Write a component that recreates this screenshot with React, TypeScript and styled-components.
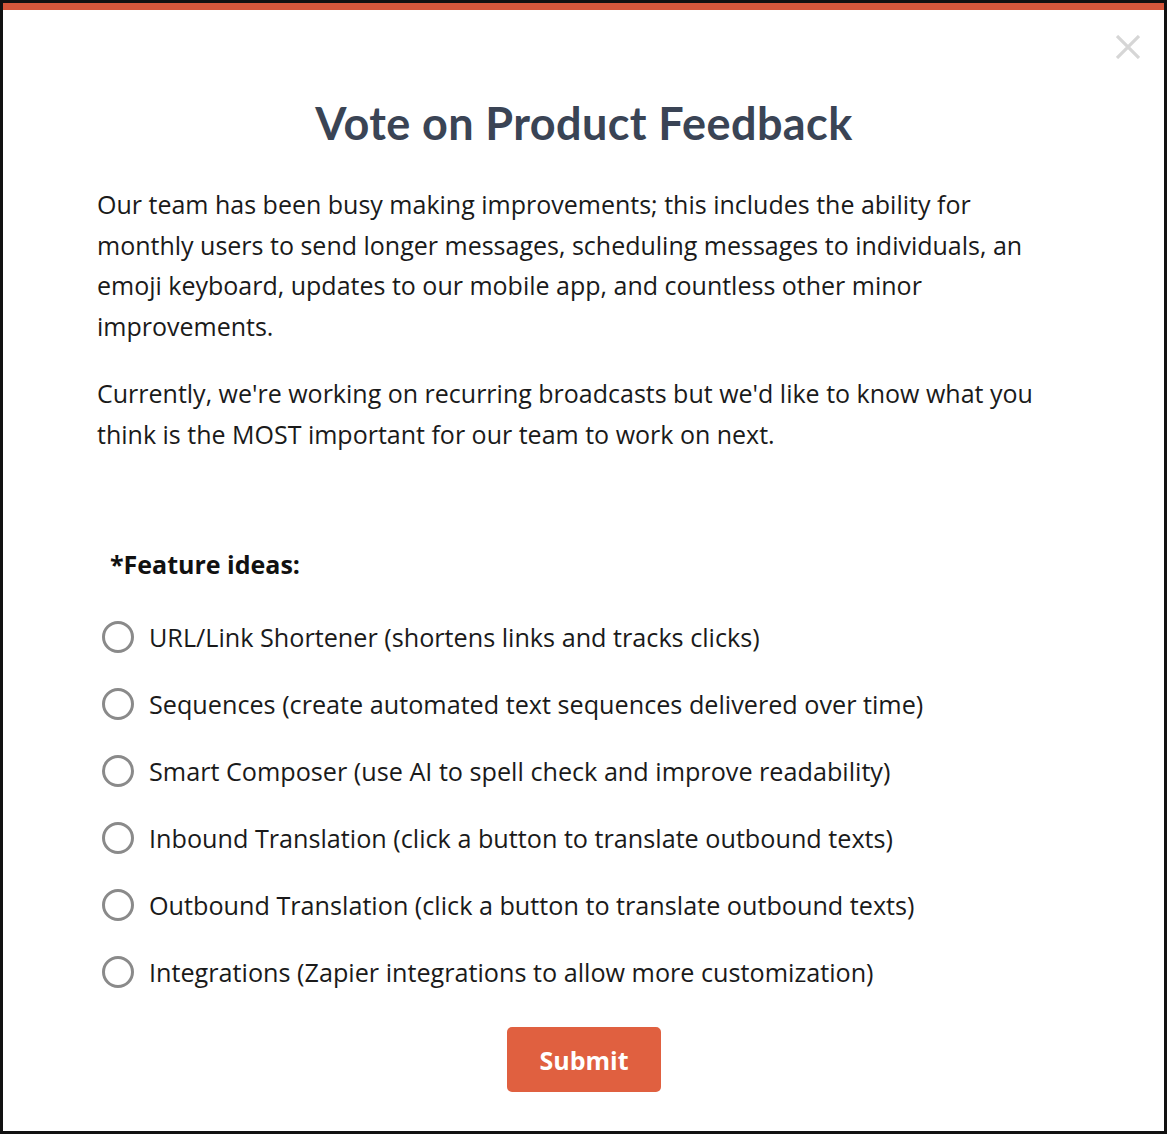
import styled, { createGlobalStyle } from "styled-components";

const GlobalStyle = createGlobalStyle`
  html, body {
    margin: 0;
    padding: 0;
    background: #000;
  }
  * {
    box-sizing: border-box;
  }
`;

const Frame = styled.div`
  width: 1167px;
  height: 1134px;
  border: 3px solid #111;
  background: #fff;
  position: relative;
  display: flex;
  flex-direction: column;
`;

const TopBar = styled.div`
  height: 7px;
  background: #d5573b;
  flex-shrink: 0;
`;

const CloseButton = styled.button`
  position: absolute;
  top: 29px;
  right: 21px;
  width: 30px;
  height: 30px;
  padding: 0;
  border: none;
  background: transparent;
  cursor: pointer;
  display: flex;
  align-items: center;
  justify-content: center;
`;

const Content = styled.div`
  padding: 0 93px 0 94px;
  display: flex;
  flex-direction: column;
  font-family: "Open Sans", "Noto Sans", sans-serif;
  color: #1a1a1a;
`;

const Title = styled.h1`
  margin: 88px 0 36px;
  text-align: center;
  font-family: Lato, "Noto Sans", sans-serif;
  font-weight: 700;
  font-size: 45px;
  letter-spacing: 0.4px;
  line-height: 50px;
  color: #3a4455;
`;

const Paragraph = styled.p`
  margin: 0 0 27px;
  max-width: 955px;
  font-size: 25px;
  line-height: 40.5px;
`;

const Form = styled.form`
  margin-top: 67px;
  display: flex;
  flex-direction: column;
`;

const Legend = styled.div`
  padding-left: 13px;
  margin-bottom: 41px;
  font-size: 25px;
  font-weight: 700;
  line-height: 32px;
  color: #111;
`;

const OptionList = styled.div`
  display: flex;
  flex-direction: column;
  gap: 35px;
`;

const Option = styled.label`
  display: flex;
  align-items: center;
  gap: 15px;
  padding-left: 5px;
  font-size: 25.2px;
  line-height: 32px;
  white-space: nowrap;
  cursor: pointer;
`;

const Radio = styled.input.attrs({ type: "radio" })`
  appearance: none;
  margin: 0;
  width: 32px;
  height: 32px;
  border-radius: 50%;
  border: 3px solid #8a8a8a;
  background: #fff;
  flex-shrink: 0;
`;

const Actions = styled.div`
  display: flex;
  justify-content: center;
  margin-top: 39px;
`;

const SubmitButton = styled.button`
  width: 154px;
  height: 65px;
  border: none;
  border-radius: 5px;
  background: #e06040;
  color: #fff;
  font-family: "Open Sans", "Noto Sans", sans-serif;
  font-weight: 700;
  font-size: 25px;
  cursor: pointer;
`;

const options = [
  "URL/Link Shortener (shortens links and tracks clicks)",
  "Sequences (create automated text sequences delivered over time)",
  "Smart Composer (use AI to spell check and improve readability)",
  "Inbound Translation (click a button to translate outbound texts)",
  "Outbound Translation (click a button to translate outbound texts)",
  "Integrations (Zapier integrations to allow more customization)",
];

const App = () => {
  return (
    <Frame>
      <GlobalStyle />
      <TopBar />
      <CloseButton aria-label="Close">
        <svg width="24" height="24" viewBox="0 0 24 24">
          <path
            d="M1 1 L23 23 M23 1 L1 23"
            stroke="#d6d6d6"
            strokeWidth="3.2"
            fill="none"
          />
        </svg>
      </CloseButton>
      <Content>
        <Title>Vote on Product Feedback</Title>
        <Paragraph>
          Our team has been busy making improvements; this includes the ability
          for monthly users to send longer messages, scheduling messages to
          individuals, an emoji keyboard, updates to our mobile app, and
          countless other minor improvements.
        </Paragraph>
        <Paragraph>
          Currently, we're working on recurring broadcasts but we'd like to know
          what you think is the MOST important for our team to work on next.
        </Paragraph>
        <Form onSubmit={(e) => e.preventDefault()}>
          <Legend>*Feature ideas:</Legend>
          <OptionList>
            {options.map((text) => (
              <Option key={text}>
                <Radio name="feature" value={text} />
                {text}
              </Option>
            ))}
          </OptionList>
          <Actions>
            <SubmitButton type="submit">Submit</SubmitButton>
          </Actions>
        </Form>
      </Content>
    </Frame>
  );
};

export default App;
